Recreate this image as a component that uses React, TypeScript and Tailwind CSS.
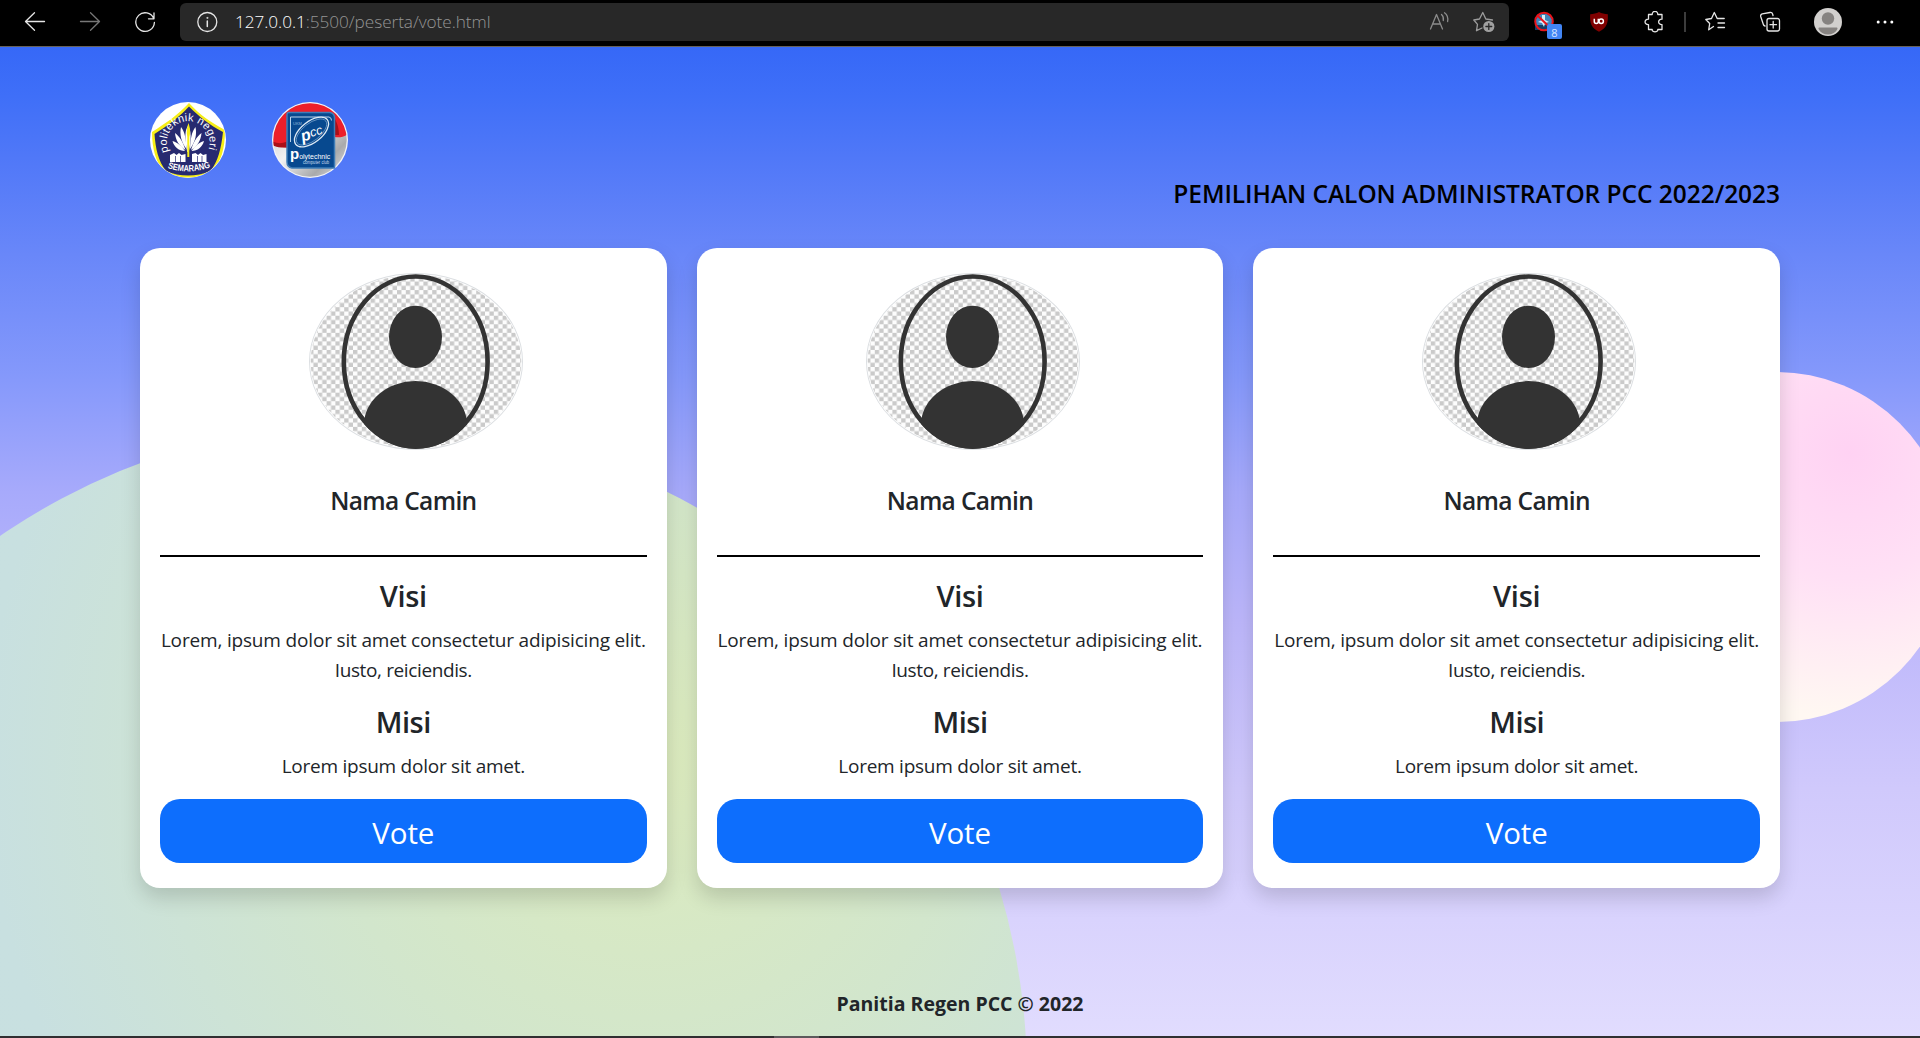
import type { ReactNode } from "react";

function Stroke({ children, className = "size-[22px] text-[#e6e6e6]" }: { children: ReactNode; className?: string }) {
  return (
    <svg viewBox="0 0 22 22" fill="none" stroke="currentColor" strokeWidth="1.3" strokeLinecap="round" strokeLinejoin="round" className={`shrink-0 ${className}`}>
      {children}
    </svg>
  );
}

function BrowserBar() {
  return (
    <div className="flex h-[47px] items-start border-b border-[#66625c] bg-black pl-6 pt-[3px]">
      <div className="flex h-[38px] w-[156px] items-center gap-[33px]">
        <Stroke>
          <path d="M20.5 10.500H1.500M10.500 1.800L1.500 10.500l9 8.700" />
        </Stroke>
        <Stroke className="size-[22px] text-[#777]">
          <path d="M1.500 10.500h19M11.500 1.800l9 8.700-9 8.700" />
        </Stroke>
        <Stroke>
          <path d="M19.700 7.500A9.300 9.300 0 1 0 20.400 11.500M20 2v5.800h-5.500" />
        </Stroke>
      </div>
      <div className="flex h-[38px] w-[1329px] items-center rounded-[6px] bg-[#282828] pl-4">
        <Stroke>
          <circle cx="11.300" cy="11" r="9.500" />
          <path d="M11.300 10v5.500" strokeWidth="1.500" />
          <circle cx="11.300" cy="6.900" r=".6" fill="currentColor" strokeWidth=".6" />
        </Stroke>
        <div className="ml-[17px] text-[17.2px] leading-[38px] font-light tracking-[-0.05px] text-[#959595]">
          <span className="text-white">127.0.0.1</span>:5500/peserta/vote.html
        </div>
        <div className="mr-[14px] ml-auto flex items-center gap-[22px]">
          <Stroke className="size-[22px] text-[#8c8c8c]">
            <path d="M1.500 18L7.500 3.500 13.500 18M3.500 13h8M12.500 3.500c1.800 1.500 2.200 3.500 1.800 6M15.500 1.800c3 2.200 3.800 5.200 3.100 8.700" />
          </Stroke>
          <Stroke className="size-[22px] text-[#9c9c9c]">
            <path d="M9 17l-5.500 2.700 1-6.300L.8 9l5.700-1L9.800 1.500 12.800 8l6.700 1" />
            <circle cx="15.800" cy="15.500" r="5.600" fill="#a0a0a0" stroke="none" />
            <path d="M12.900 15.500h5.800M15.800 12.600v5.800" stroke="#282828" />
          </Stroke>
        </div>
      </div>
      <div className="flex h-[38px] items-center pl-[24px]">
        <div className="relative size-[22px]">
          <svg viewBox="0 0 22 22" className="size-[22px]">
            <circle cx="11" cy="11" r="8.500" fill="#3f86bd" />
            <path d="M2 14h18v5H2z" fill="#123e66" />
            <path d="M9 4l3 0 0 5 4 2-4 1-1 4-2-4-4-1 4-2z" fill="#d9eef8" />
            <circle cx="11" cy="10.500" r="8.800" fill="none" stroke="#e8141c" strokeWidth="2" />
            <path d="M4.500 4.500l13 12.500" stroke="#e8141c" strokeWidth="2" />
          </svg>
          <span className="absolute top-[13px] left-[14px] flex size-[15px] items-center justify-center rounded-[2px] bg-[#4285f4] pt-[2px] text-[11px] leading-none text-[#d8e6ff]">8</span>
        </div>
        <svg viewBox="0 0 22 22" className="ml-[33px] size-[22px]">
          <path d="M11 1c2.600 1.600 5.500 2 8.800 2.200.6 8.800-1.300 13.800-8.800 17.600C3.500 17 1.600 12 2.200 3.200 5.500 3 8.400 2.600 11 1z" fill="#800000" />
          <path d="M6.300 7.800v2.700a2 2 0 0 0 4 0V7.800" fill="none" stroke="#fff" strokeWidth="1.500" />
          <circle cx="13.200" cy="10.300" r="2.200" fill="none" stroke="#fff" strokeWidth="1.500" />
        </svg>
        <Stroke className="ml-[34px] size-[22px] text-[#e6e6e6]">
          <path d="M4.500 3.500h3.700c-.2-4.200 5.800-4.200 5.600 0H18v4.700c-4.500-.2-4.500 5.600 0 5.400V18.500h-4.200c.2 3.200-5.800 3.200-5.600 0H4.500v-4.900c-4.600.2-4.600-5.600 0-5.400z" />
        </Stroke>
        <div className="ml-[18px] h-5 w-[2px] bg-[#3c3c3c]" />
        <Stroke className="ml-[19px] size-[22px] text-[#e6e6e6]">
          <path d="M8.500 15.500l-4.800 3.300 1-6.300L.8 8.500l5.700-1L9.300 1.500l2.900 6h7M13 12h6.500M13 16.500h6.500" />
        </Stroke>
        <Stroke className="ml-[32px] size-[22px] text-[#e6e6e6]">
          <rect x="8" y="7.500" width="12.500" height="12.500" rx="2" />
          <path d="M14.200 10.500v6.500M11 13.700h6.500M6 15c-1-.2-1.500-.8-1.800-2L1.700 5.500C1.400 4 2 3.200 3.200 2.900L11 1.500c1.500-.2 2.300.3 2.700 1.700l.3 1.500" />
        </Stroke>
        <svg viewBox="0 0 28 28" className="ml-[33px] size-7">
          <circle cx="14" cy="14" r="14" fill="#d2d0ce" />
          <circle cx="14" cy="10.500" r="6.200" fill="#868381" />
          <path d="M5.300 19.500h17.400c1 0 1 1 .5 2-2 3.200-5.200 5-9.200 5s-7.200-1.800-9.200-5c-.5-1-.5-2 .5-2z" fill="#868381" />
        </svg>
        <svg viewBox="0 0 18 4" className="ml-[34px] h-1 w-[18px] fill-white">
          <circle cx="2.200" cy="2" r="1.500" />
          <circle cx="9" cy="2" r="1.500" />
          <circle cx="15.800" cy="2" r="1.500" />
        </svg>
      </div>
    </div>
  );
}

function PolinesLogo() {
  return (
    <svg viewBox="0 0 76 76" className="size-[76px]">
      <defs>
        <clipPath id="polines-round">
          <circle cx="38" cy="38" r="37.500" />
        </clipPath>
        <path id="polines-top" d="M18.600 49.500A21.500 21.500 0 1 1 58 49" />
        <path id="polines-bottom" d="M16.500 65.500Q38 73.500 60.500 65" />
      </defs>
      <circle cx="38" cy="38" r="38" fill="#fff" />
      <g clipPath="url(#polines-round)">
        <path d="M39 1C50 13 60 20 75 28 75 47 71 60 62 71 46 79 28 79 14 71 6 60 2 47 2 30 16 21 28 13 39 1z" fill="#f7ee16" />
        <path d="M39 4.500C50 15.500 59 22.500 73 30 71 48 68 59 60.500 69 46 75 30 75 16 69 8 59 5.500 46 4.500 32 18 23.500 28 16 39 4.500z" fill="#272a70" />
      </g>
      <text fill="#fff" fontSize="11" textLength="83" lengthAdjust="spacing" className="font-['Liberation_Sans']">
        <textPath href="#polines-top">politeknik negeri</textPath>
      </text>
      <g fill="#fff">
        <path d="M38 24c3.200 4 3.500 12 .8 26h-1.600C34.500 36 34.800 28 38 24z" />
        <path d="M31 25c4 5 5 12 5.500 22C31 40 29.500 32 31 25zM45.500 25c-4 5-5 12-5.500 22 5.500-7 7-15 5.500-22z" />
        <path d="M25 31c5 4 8 9 10.500 17C29 44 25.500 38 25 31zM51.500 31c-5 4-8 9-10.500 17 6.500-4 10-10 10.500-17z" />
        <path d="M22.500 39c6 2 9 5 12.500 10-6 0-11-4-12.500-10zM54 39c-6 2-9 5-12.500 10 6 0 11-4 12.500-10z" />
        <path d="M20 53l4-2 2.500 2 2.500-2 2.500 2 4-1v8H20zM42 52l3.500-1 2.500 2 2.500-2 2.500 2 3.500-1v8H42z" />
      </g>
      <path d="M25.500 54v6M30.500 54v6M47.500 54v6M52 54v6" stroke="#272a70" strokeWidth=".7" />
      <path d="M38.500 21c2 6 2 10 .8 14v20h-2V35c-1-5-.5-10 1.200-14z" fill="#f7ee16" />
      <text fill="#fff" fontSize="9" textLength="44" lengthAdjust="spacingAndGlyphs" className="font-['Liberation_Sans'] font-bold">
        <textPath href="#polines-bottom" startOffset="1">SEMARANG</textPath>
      </text>
    </svg>
  );
}

function PccLogo() {
  return (
    <svg viewBox="0 0 76 76" className="size-[76px]">
      <defs>
        <linearGradient id="flag-white" x1="0" y1="0" x2="1" y2="1">
          <stop offset="0" stopColor="#b9b9bb" />
          <stop offset=".45" stopColor="#f2f2f2" />
          <stop offset=".75" stopColor="#a9aaac" />
          <stop offset="1" stopColor="#e9e9e9" />
        </linearGradient>
        <clipPath id="pcc-round">
          <circle cx="38" cy="38" r="36.700" />
        </clipPath>
      </defs>
      <circle cx="38" cy="38" r="38" fill="#f3f4f8" />
      <g clipPath="url(#pcc-round)">
        <rect width="76" height="76" fill="url(#flag-white)" />
        <path d="M0 0h76v32c-6 4-10 4-18 2C40 40 22 50 0 43z" fill="#ec1f2a" />
        <path d="M0 39c7 4 14 2 22-3v9C13 46 6 46 0 43zM60 12c4 6 7 12 7 21h-9z" fill="#a91019" />
      </g>
      <path d="M17 10.500h41q4.500 1 4.500 5V66H20q-5-1-5-6V12.500q0-2 2-2z" fill="#07498f" stroke="#3f7db8" strokeWidth="1.500" />
      <path d="M18.500 40V15H57q2.500.5 2.500 3.500" fill="none" stroke="#b9d2ea" strokeWidth="1" />
      <ellipse cx="39.500" cy="30" rx="20" ry="10.500" transform="rotate(-38 39.500 30)" fill="#07498f" stroke="#dce9f5" strokeWidth="1.300" />
      <ellipse cx="39.500" cy="30" rx="18" ry="8.700" transform="rotate(-38 39.500 30)" fill="none" stroke="#8fb4d8" strokeWidth=".6" />
      <text x="30.500" y="40" fill="#fff" transform="rotate(-17 30 40)" className="font-['Liberation_Sans'] italic">
        <tspan fontSize="16" className="font-bold">p</tspan>
        <tspan fontSize="12.500" dy="-2">cc</tspan>
      </text>
      <text x="21" y="23" fill="#8fb4d8" fontSize="4" className="font-['Liberation_Sans']">UKM</text>
      <text x="18" y="57" fill="#fff" className="font-['Liberation_Sans']">
        <tspan fontSize="15" className="font-bold">p</tspan>
        <tspan fontSize="7.300" textLength="31" lengthAdjust="spacingAndGlyphs">olytechnic</tspan>
      </text>
      <text x="31" y="62" fill="#c7dbee" fontSize="4.600" textLength="26" lengthAdjust="spacingAndGlyphs" className="font-['Liberation_Sans']">computer club</text>
    </svg>
  );
}

function Portrait({ id }: { id: string }) {
  return (
    <svg viewBox="0 0 214 176" preserveAspectRatio="none" className="ml-[149px] h-[177px] w-[214px]">
      <defs>
        <pattern id={`${id}-checks`} width="8.800" height="8.500" patternUnits="userSpaceOnUse">
          <rect width="8.800" height="8.500" fill="#fdfdfd" />
          <path d="M0 0h4.400v4.250H0zM4.400 4.250h4.400v4.250H4.400z" fill="#cacaca" />
        </pattern>
        <clipPath id={`${id}-ring`}>
          <ellipse cx="106.700" cy="88" rx="74" ry="87" />
        </clipPath>
      </defs>
      <ellipse cx="107" cy="88" rx="106.500" ry="87.500" fill="#fff" stroke="#dcdfe2" />
      <ellipse cx="107" cy="88" rx="105.300" ry="86.300" fill={`url(#${id}-checks)`} />
      <ellipse cx="106.700" cy="88" rx="71.900" ry="84.500" fill="none" stroke="#333" strokeWidth="4.600" />
      <ellipse cx="106.500" cy="63.500" rx="26.500" ry="31" fill="#333" />
      <ellipse cx="106.500" cy="151" rx="51.500" ry="43.500" fill="#333" clipPath={`url(#${id}-ring)`} />
    </svg>
  );
}

function CandidateCard({ id }: { id: string }) {
  return (
    <article className="h-[640px] rounded-[20px] bg-white px-5 pt-[25px] text-center text-[#212529] shadow-[0_10px_20px_rgba(0,0,0,0.15)]">
      <Portrait id={id} />
      <h5 className="mt-9 text-[24.5px] leading-[30px] font-semibold tracking-[-0.65px]">Nama Camin</h5>
      <hr className="mt-[39px] border-t-2 border-black" />
      <h4 className="mt-[21px] text-[29px] leading-9 font-semibold tracking-[-0.3px]">Visi</h4>
      <p className="mt-[11px] text-[19px] leading-[30px]">
        <span className="block tracking-[-0.17px] whitespace-nowrap">Lorem, ipsum dolor sit amet consectetur adipisicing elit.</span>
        <span className="block tracking-[-0.38px]">Iusto, reiciendis.</span>
      </p>
      <h4 className="mt-[19px] text-[29px] leading-9 font-semibold tracking-[-0.5px]">Misi</h4>
      <p className="mt-[11px] text-[19px] leading-[30px] tracking-[-0.25px]">Lorem ipsum dolor sit amet.</p>
      <button className="mt-[18px] h-16 w-full rounded-[20px] bg-[#0d6efd] pt-[3px] text-[29.5px] leading-[45px] tracking-[-0.1px] text-white">Vote</button>
    </article>
  );
}

export default function App() {
  return (
    <div className="flex h-[1038px] w-[1920px] flex-col overflow-hidden font-['Open_Sans',sans-serif]">
      <BrowserBar />
      <main className="relative isolate flex-1 overflow-hidden bg-[linear-gradient(180deg,#3668f7_0%,#3f6ff8_5%,#5279f8_12%,#6987f9_21%,#8498fb_33%,#a7aafb_45%,#bdb7fb_58%,#d0c9fc_75%,#e1dcfe_100%)] px-[140px] pt-[55px]">
        <div className="absolute top-[374px] left-[-285px] -z-10 size-[1312px] rounded-full bg-[radial-gradient(circle_at_930px_340px,#dcebbd_0%,#d2e6cc_320px,#c8e0e0_660px,#c5dee3_100%)]" />
        <div className="absolute top-[325px] left-[1601px] -z-10 size-[350px] rounded-full bg-[radial-gradient(circle_at_249px_81px,#ffd2f3_0%,#ffe0f5_125px,#fff8f2_265px)]" />
        <header>
          <div className="flex gap-[46px] pl-[10px]">
            <PolinesLogo />
            <PccLogo />
          </div>
          <h5 className="pt-px text-right text-[24.5px] leading-[30px] font-semibold tracking-[-0.05px] text-black">PEMILIHAN CALON ADMINISTRATOR PCC 2022/2023</h5>
        </header>
        <section className="mt-[39px] grid grid-cols-3 gap-[30px]">
          <CandidateCard id="first" />
          <CandidateCard id="second" />
          <CandidateCard id="third" />
        </section>
        <footer className="mt-[101px] text-center text-[19.5px] leading-[30px] font-bold text-[#212529]">Panitia Regen PCC © 2022</footer>
      </main>
      <div className="h-[2px] shrink-0 bg-[#302f31] pl-[774px]">
        <div className="h-full w-[45px] bg-[#5c5a5c]" />
      </div>
    </div>
  );
}
